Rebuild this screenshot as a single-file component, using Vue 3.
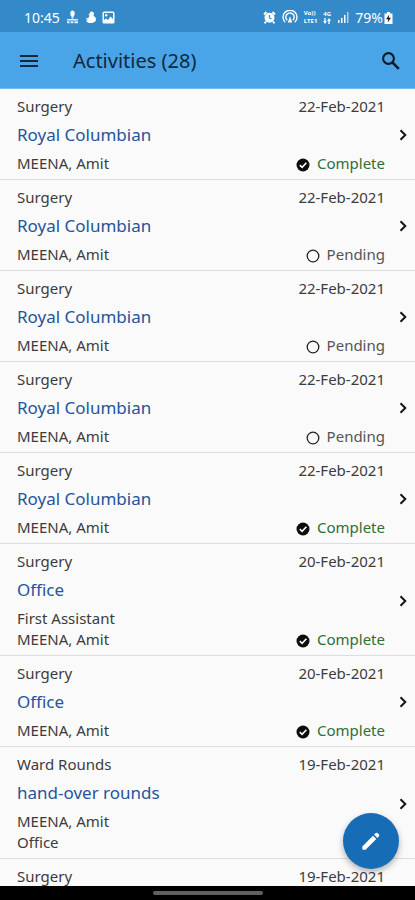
<script setup>
const activities = [
  { type: 'Surgery', date: '22-Feb-2021', place: 'Royal Columbian', lines: ['MEENA, Amit'], status: 'Complete' },
  { type: 'Surgery', date: '22-Feb-2021', place: 'Royal Columbian', lines: ['MEENA, Amit'], status: 'Pending' },
  { type: 'Surgery', date: '22-Feb-2021', place: 'Royal Columbian', lines: ['MEENA, Amit'], status: 'Pending' },
  { type: 'Surgery', date: '22-Feb-2021', place: 'Royal Columbian', lines: ['MEENA, Amit'], status: 'Pending' },
  { type: 'Surgery', date: '22-Feb-2021', place: 'Royal Columbian', lines: ['MEENA, Amit'], status: 'Complete' },
  { type: 'Surgery', date: '20-Feb-2021', place: 'Office', lines: ['First Assistant', 'MEENA, Amit'], status: 'Complete' },
  { type: 'Surgery', date: '20-Feb-2021', place: 'Office', lines: ['MEENA, Amit'], status: 'Complete' },
  { type: 'Ward Rounds', date: '19-Feb-2021', place: 'hand-over rounds', lines: ['MEENA, Amit', 'Office'], status: '' },
  { type: 'Surgery', date: '19-Feb-2021', place: '', lines: [], status: '' },
]
</script>

<template>
  <div class="screen">
    <div class="status-bar">
      <span class="clock">10:45</span>
      <svg class="person" width="13" height="14" viewBox="0 0 13 14" fill="#fff">
        <ellipse cx="6.5" cy="3.5" rx="2.2" ry="3" />
        <path d="M5.5 6h2v2.500h-2zM1 9h11v1.400H1zM1 11.200h2.600v2H1zM4.600 11.200h2.800v2H4.600zM8.400 11.200H12v2H8.400z" opacity=".85" />
      </svg>
      <svg class="bird" width="12" height="14" viewBox="0 0 12 14" fill="#fff">
        <path d="M6 1.600a2.300 2.300 0 0 1 3 2.200c0 1-.5 1.500-.5 2.200 1.500.6 2.500 1.800 2.500 3.300C11 11.800 8.800 13 6 13c-2.600 0-4.500-1-5-2.600 1 .3 1.600.1 2-.3-1.200-.3-2-1-2.200-2 .8.300 1.700.2 2.300-.2 1-.7 1.200-1.700 1.300-3L3.300 4.200l1.300-.8c.2-.8.700-1.500 1.400-1.800z" />
      </svg>
      <svg class="photo" width="13" height="13" viewBox="0 0 13 13">
        <rect x=".5" y=".5" width="12" height="12" rx="1.500" fill="#fff" />
        <path d="M2 2h9v6L8.500 5.500 6 9 4 7.500 2 9z" fill="#3489c9" />
        <circle cx="4.200" cy="4.200" r="1.200" fill="#fff" />
      </svg>
      <div class="system">
        <svg width="13" height="13" viewBox="0 0 13 13">
          <path d="M1 3.500 3.500 1M12 3.500 9.500 1M3 10.500l-1.500 1.800M10 10.500l1.500 1.800" stroke="#fff" stroke-width="1.800" />
          <circle cx="6.500" cy="6.800" r="5" fill="#fff" />
          <path d="M6.500 4v3l2 1" fill="none" stroke="#3489c9" stroke-width="1.200" />
        </svg>
        <svg class="hotspot" width="16" height="14" viewBox="0 0 16 14" fill="none" stroke="#fff" stroke-width="1.400">
          <path d="M3.200 12.300a7 7 0 1 1 9.600 0M5.200 10.300a4.200 4.200 0 1 1 5.600 0" />
          <path d="M8 6.300 10.200 12.500H5.800z" fill="#fff" stroke="none" />
        </svg>
        <span class="network"><span>Vo))</span><span>LTE1</span></span>
        <span class="network"><span>4G</span>
          <svg width="8" height="6" viewBox="0 0 8 6" fill="#fff">
            <path d="M0 3h1.300V0h1.400v3H4L2 6zM4 3l2-3 2 3H6.700v3H5.300V3z" />
          </svg>
        </span>
        <svg width="12" height="12" viewBox="0 0 12 12" fill="#fff">
          <path d="M1 9h1.500v3H1zM4 7h1.500v5H4zM7 4h1.500v8H7z" />
          <path d="M10 1h1.500v11H10z" opacity=".6" />
        </svg>
        <span class="charge">
          79%
          <svg width="9" height="13" viewBox="0 0 9 13">
            <path d="M3 1h3v1.500h2.500V13h-8V2.500H3z" fill="#fff" />
            <path d="M5.300 3.500 2 8.200h2.200L3.700 11.500 7 6.800H4.800z" fill="#17202a" />
          </svg>
        </span>
      </div>
    </div>

    <header class="app-bar">
      <button class="icon-button" type="button" aria-label="Menu">
        <svg width="18" height="14" viewBox="0 0 18 14" fill="none" stroke="#14283a" stroke-width="2">
          <path d="M0 2h18M0 7h18M0 12h18" />
        </svg>
      </button>
      <h1>Activities (28)</h1>
      <button class="icon-button" type="button" aria-label="Search">
        <svg width="20" height="20" viewBox="0 0 20 20" fill="none" stroke="#101820">
          <circle cx="7.500" cy="7.500" r="5.400" stroke-width="2.100" />
          <path d="m11.500 11.500 6.300 6.300" stroke-width="2.500" />
        </svg>
      </button>
    </header>

    <main class="list">
      <a v-for="(item, index) in activities" :key="index" class="row" href="#">
        <div class="content">
          <div class="line">
            <span>{{ item.type }}</span>
            <span class="date">{{ item.date }}</span>
          </div>
          <div class="place">{{ item.place }}</div>
          <div class="line foot">
            <div>
              <div v-for="text in item.lines" :key="text">{{ text }}</div>
            </div>
            <span v-if="item.status" class="status" :class="item.status.toLowerCase()">
              <svg width="14" height="14" viewBox="0 0 14 14" fill="none">
                <template v-if="item.status === 'Complete'">
                  <circle cx="7" cy="7" r="6.500" fill="#0c0c0c" />
                  <path d="m3.800 7.200 2.300 2.200 4.300-4.600" stroke="#fff" stroke-width="1.600" />
                </template>
                <circle v-else cx="7" cy="7" r="5.800" stroke="#222" stroke-width="1.300" />
              </svg>
              {{ item.status }}
            </span>
          </div>
        </div>
        <svg class="chevron" width="8" height="12" viewBox="0 0 8 12" fill="none" stroke="#151515" stroke-width="2">
          <path d="m1.500 1.200 4.800 4.800-4.800 4.800" />
        </svg>
      </a>
    </main>

    <footer class="nav-bar">
      <span class="handle"></span>
      <button class="fab" type="button" aria-label="Edit">
        <svg width="20" height="20" viewBox="0 0 20 20" fill="#fff">
          <path d="M1.300 15.400 12 4.700l3.300 3.300L4.600 18.700H2.300a1 1 0 0 1-1-1z" />
          <path d="m13.100 3.600 1.400-1.400c.7-.7 1.600-.7 2.300 0l1 1c.7.7.7 1.600 0 2.300l-1.400 1.400z" />
        </svg>
      </button>
    </footer>
  </div>
</template>

<style>
body {
  margin: 0;
  background: #fafafa;
}
</style>

<style scoped>
.screen {
  display: flex;
  flex-direction: column;
  height: 100vh;
  overflow: hidden;
  background: #fafafa;
  color: #3c3c3c;
  font-family: "Noto Sans", "Open Sans", sans-serif;
  font-size: 15px;
  line-height: 21px;
}

.status-bar {
  display: flex;
  align-items: center;
  flex: none;
  height: 32px;
  padding: 2px 22px 0 24px;
  box-sizing: border-box;
  background: #3489c9;
  color: #fff;
  font-size: 14px;
}

.person,
.bird {
  margin-left: 6px;
}

.photo {
  margin-left: 5px;
}

.system {
  display: flex;
  align-items: center;
  gap: 6px;
  margin-left: auto;
}

.network {
  display: flex;
  flex-direction: column;
  font-size: 6px;
  font-weight: 700;
  line-height: 8px;
}

.charge {
  display: flex;
  align-items: center;
  gap: 1px;
}

.app-bar {
  display: flex;
  align-items: center;
  flex: none;
  height: 57px;
  padding: 2px 14px 0 18px;
  box-sizing: border-box;
  background: #4aa5e8;
  border-bottom: 1px solid #77b9ed;
}

.icon-button {
  display: flex;
  padding: 0;
  border: 0;
  background: none;
  cursor: pointer;
}

.icon-button:first-child {
  padding: 2px;
}

h1 {
  flex: 1;
  margin: 0 0 0 33px;
  color: #13283a;
  font-size: 20px;
  font-weight: 400;
  line-height: 28px;
}

.list {
  flex: 1;
  min-height: 0;
  overflow-y: auto;
  scrollbar-width: none;
}

.row {
  display: flex;
  align-items: center;
  padding: 7px 8px 5px 17px;
  border-bottom: 1px solid #dedede;
  color: inherit;
  text-decoration: none;
}

.content {
  flex: 1;
  min-width: 0;
}

.line {
  display: flex;
  justify-content: space-between;
}

.foot {
  align-items: flex-end;
}

.place {
  min-height: 36px;
  color: #25549a;
  font-size: 17px;
  line-height: 36px;
}

.status {
  display: flex;
  align-items: center;
  gap: 7px;
}

.status svg {
  margin-top: 3px;
}

.complete {
  color: #2f6f36;
}

.pending {
  color: #555;
}

.chevron {
  margin-left: 14px;
}

.nav-bar {
  position: relative;
  display: flex;
  align-items: center;
  justify-content: center;
  flex: none;
  height: 14px;
  background: #000;
}

.handle {
  width: 110px;
  height: 4px;
  border-radius: 2px;
  background: #606060;
}

.fab {
  position: absolute;
  right: 16px;
  bottom: 31px;
  display: flex;
  align-items: center;
  justify-content: center;
  width: 56px;
  height: 56px;
  padding: 0;
  border: 0;
  border-radius: 50%;
  background: #176db5;
  box-shadow: 0 3px 6px rgba(0, 0, 0, 0.3);
  cursor: pointer;
}
</style>
